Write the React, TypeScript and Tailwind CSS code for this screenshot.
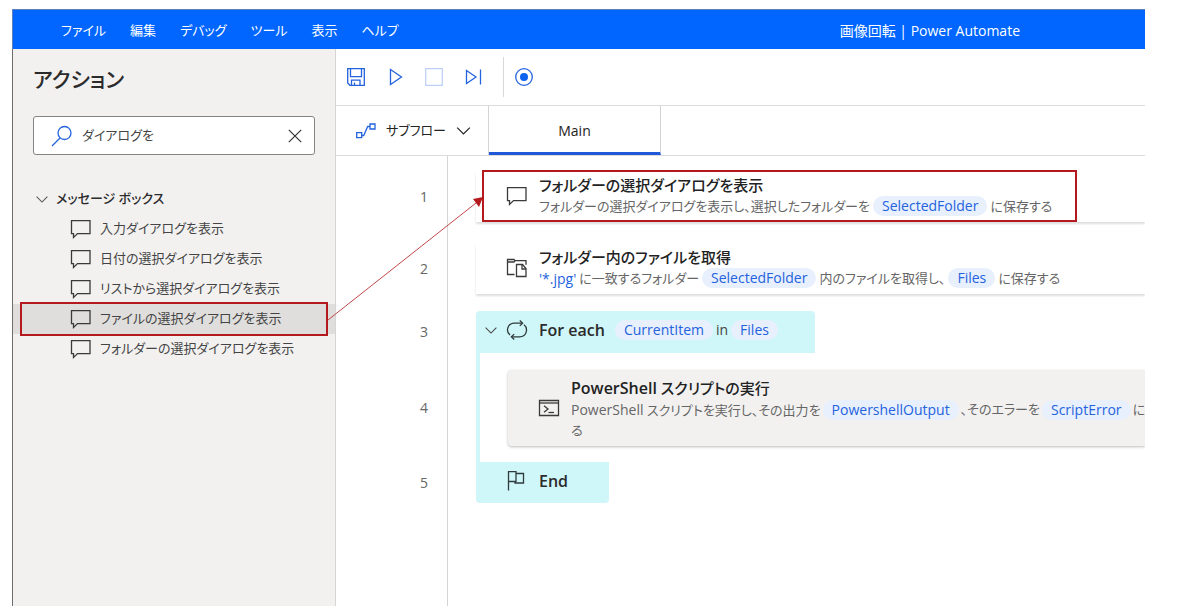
import type { ReactNode } from "react";

const MENU = ["ファイル", "編集", "デバッグ", "ツール", "表示", "ヘルプ"];

const ACTIONS = [
  { id: "input", label: "入力ダイアログを表示" },
  { id: "date", label: "日付の選択ダイアログを表示" },
  { id: "list", label: "リストから選択ダイアログを表示" },
  { id: "file", label: "ファイルの選択ダイアログを表示" },
  { id: "folder", label: "フォルダーの選択ダイアログを表示" },
];

function MessageIcon() {
  return (
    <svg width="22" height="20" viewBox="0 0 22 20" fill="none" stroke="#3a3a3a" strokeWidth="1.3" className="shrink-0">
      <path d="M1.5 1.6h18.5v13H7.500l-4 3.800v-3.800h-2z" />
    </svg>
  );
}

function FolderFilesIcon() {
  return (
    <svg width="22" height="20" viewBox="0 0 22 20" fill="none" stroke="#3a3a3a" strokeWidth="1.3" className="shrink-0">
      <path d="M8.500 16.500h-7v-15h6.500l1 1.200h11v4" />
      <path d="M1.500 4h6.500l1-1.300" />
      <path d="M10.500 6.500h6l3.500 4v8h-9.500z" />
      <path d="M16 6.500v4.500h4" />
    </svg>
  );
}

function LoopIcon() {
  return (
    <svg width="22" height="20" viewBox="0 0 22 20" fill="none" stroke="#2f3b3c" strokeWidth="1.3" className="shrink-0">
      <path d="M4 15C0 12 .5 3.500 8.500 3.200h8" />
      <path d="M13.800.5l2.800 2.700-2.800 2.700" />
      <path d="M18 4.800c4 3 3.500 11.700-4.500 12h-8" />
      <path d="M8.200 14.100l-2.800 2.700 2.800 2.700" />
    </svg>
  );
}

function ConsoleIcon() {
  return (
    <svg width="22" height="18" viewBox="0 0 22 18" fill="none" stroke="#3a3a3a" strokeWidth="1.3" className="shrink-0">
      <path d="M1.500 1.500h19v15h-19z" />
      <path d="M1.500 4h19" />
      <path d="M6 6.800l4 3.200-4 3.200" />
      <path d="M10.500 13.500h5.500" />
    </svg>
  );
}

function FlagIcon() {
  return (
    <svg width="22" height="20" viewBox="0 0 22 20" fill="none" stroke="#2f3b3c" strokeWidth="1.3" className="shrink-0">
      <path d="M2.500 19.500v-19h7.500v10H2.500" />
      <path d="M10 2.500h7.500v9.500H9v-1.500" />
    </svg>
  );
}

function Chevron({ className }: { className: string }) {
  return (
    <svg viewBox="0 0 14 8" fill="none" stroke="currentColor" strokeWidth="1.2" className={className}>
      <path d="M.7.7L7 7 13.300.7" />
    </svg>
  );
}

function Chip({ children }: { children: ReactNode }) {
  return (
    <button type="button" className="h-5 shrink-0 rounded-full bg-[#e8f0fd] px-[9px] text-sm leading-5 text-[#2463dd]">
      {children}
    </button>
  );
}

function Line({ n, spacing, children }: { n: number; spacing: string; children: ReactNode }) {
  return (
    <li className="flex">
      <span
        className={`flex w-28 shrink-0 items-center justify-end border-r border-[#d4d4d4] pr-[19px] text-sm text-[#666] ${spacing}`}
      >
        {n}
      </span>
      <div className="min-w-0 flex-1 pl-7">{children}</div>
    </li>
  );
}

function Sidebar() {
  return (
    <aside className="flex w-[324px] shrink-0 flex-col border-r border-l border-r-[#d6d5d4] border-l-[#6e6e6e] bg-[#f2f1f0]">
      <h1 className="px-5 pt-4 text-[21px] leading-7 font-medium text-[#2b2b2b]">アクション</h1>
      <div className="mx-5 mt-[23px] flex h-[39px] items-center rounded-[3px] border border-[#858483] bg-white px-3">
        <svg width="32" height="22" viewBox="0 0 32 22" fill="none" stroke="#2463dd" strokeWidth="1.3" className="shrink-0">
          <circle cx="18.500" cy="8" r="6.500" />
          <path d="M14 13l-8 8" />
        </svg>
        <input
          aria-label="アクションの検索"
          defaultValue="ダイアログを"
          className="min-w-0 flex-1 pl-1 text-[13px] text-[#444] outline-none"
        />
        <button type="button" aria-label="クリア">
          <svg width="14" height="14" viewBox="0 0 14 14" stroke="#333" strokeWidth="1.200">
            <path d="M.8.8l12.400 12.400M13.200.8L.8 13.200" />
          </svg>
        </button>
      </div>
      <button type="button" className="mt-[29px] flex h-[30px] items-center gap-2 pl-[23px] text-[13px] font-medium text-[#2b2b2b]">
        <Chevron className="h-[7px] w-3 text-[#555]" />
        メッセージ ボックス
      </button>
      <ul>
        {ACTIONS.map((action) => {
          const isSelected = action.id === "file";

          return (
            <li key={action.id} className="relative">
              <button
                type="button"
                className={`flex h-[30px] w-full items-center gap-2 pl-[57px] text-[13px] text-[#444] ${
                  isSelected ? "bg-[#dfdedc]" : ""
                }`}
              >
                <MessageIcon />
                {action.label}
              </button>
              {isSelected && (
                <span className="pointer-events-none absolute -inset-y-0.5 right-[7px] left-[7px] border-2 border-[#b3191d]" />
              )}
            </li>
          );
        })}
      </ul>
    </aside>
  );
}

function Toolbar() {
  return (
    <div className="flex h-[57px] shrink-0 items-center border-b border-[#dcdcdc] pl-[10px]">
      <button type="button" aria-label="保存" className="flex w-5 justify-center">
        <svg width="18" height="18" viewBox="0 0 18 18" fill="none" stroke="#2463dd" strokeWidth="1.300">
          <path d="M.7.7h16.600v16.600H3L.7 15z" />
          <path d="M3.500.7v8h11v-8" />
          <path d="M4.500 17v-4.800h8.500V17M7.500 17v-2.500" />
        </svg>
      </button>
      <button type="button" aria-label="実行" className="ml-5 flex w-5 justify-center">
        <svg width="14" height="18" viewBox="0 0 14 18" fill="none" stroke="#2463dd" strokeWidth="1.300">
          <path d="M1.500 1.500L12.500 9l-11 7.500z" />
        </svg>
      </button>
      <button type="button" aria-label="停止" disabled className="ml-[18px] flex w-5 justify-center">
        <svg width="18" height="18" viewBox="0 0 18 18" fill="none" stroke="#bcd0f6" strokeWidth="1.200">
          <path d="M.7.7h16.600v16.600H.7z" />
        </svg>
      </button>
      <button type="button" aria-label="ステップ実行" className="ml-5 flex w-5 justify-center">
        <svg width="18" height="18" viewBox="0 0 18 18" fill="none" stroke="#2463dd" strokeWidth="1.300">
          <path d="M1.500 2.500L11 9l-9.500 6.500zM15.500 1.500v15" />
        </svg>
      </button>
      <span className="ml-[19px] h-10 w-px bg-[#d8d8d8]" />
      <button type="button" aria-label="レコーダー" className="ml-[10px] flex w-5 justify-center">
        <svg width="20" height="20" viewBox="0 0 20 20" fill="none" stroke="#2463dd" strokeWidth="1.300">
          <circle cx="10" cy="10" r="8.300" />
          <circle cx="10" cy="10" r="4" fill="#0f62f0" stroke="none" />
        </svg>
      </button>
    </div>
  );
}

function Tabs() {
  return (
    <div className="flex h-[50px] shrink-0 border-b border-[#dcdcdc]">
      <button type="button" className="flex w-[153px] items-center border-r border-[#d4d4d4] pl-5 text-[13px] text-[#222]">
        <svg width="20" height="16" viewBox="0 0 20 16" fill="none" stroke="#2463dd" strokeWidth="1.300">
          <path d="M.7 9.700h5v5h-5zM14 1h5v5h-5z" />
          <path d="M5.700 12.500h2l4-9H14" />
        </svg>
        <span className="ml-[10px]">サブフロー</span>
        <Chevron className="mr-[17px] ml-auto h-2 w-[15px]" />
      </button>
      <button
        type="button"
        aria-current="page"
        className="h-[49px] w-[172px] border-r border-b-3 border-r-[#d4d4d4] border-b-[#2058d8] pt-1 text-sm text-[#222]"
      >
        Main
      </button>
    </div>
  );
}

function Flow() {
  return (
    <ol className="leading-[21px]">
      <Line n={1} spacing="pt-[15px]">
        <div className="pt-[15px]">
          <section className="relative flex h-[51px] items-center gap-[11px] pb-0.5 pl-[30px] whitespace-nowrap shadow-[0_2px_2px_#dedede]">
            <MessageIcon />
            <div>
              <h2 className="text-[15px] leading-[21px] font-medium text-[#222]">フォルダーの選択ダイアログを表示</h2>
              <p className="flex items-center gap-[3px] text-[13px] leading-[21px] text-[#666]">
                フォルダーの選択ダイアログを表示し、選択したフォルダーを
                <Chip>SelectedFolder</Chip>
                に保存する
              </p>
            </div>
            <span className="pointer-events-none absolute -top-px bottom-0 left-[6px] w-[595px] border-2 border-[#b3191d]" />
          </section>
        </div>
      </Line>
      <Line n={2} spacing="pt-[21px]">
        <div className="pt-[21px]">
          <section className="flex h-[51px] items-center gap-[11px] pb-0.5 pl-[30px] whitespace-nowrap shadow-[0_2px_2px_#dedede]">
            <FolderFilesIcon />
            <div>
              <h2 className="text-[15px] leading-[21px] font-medium text-[#222]">フォルダー内のファイルを取得</h2>
              <p className="flex items-center gap-[3px] text-[13px] leading-[21px] text-[#666]">
                <span className="text-sm leading-[21px] text-[#2463dd]">'*.jpg'</span>
                に一致するフォルダー
                <Chip>SelectedFolder</Chip>
                内のファイルを取得し、
                <Chip>Files</Chip>
                に保存する
              </p>
            </div>
          </section>
        </div>
      </Line>
      <Line n={3} spacing="pt-[17px]">
        <div className="pt-[17px]">
          <section className="flex h-[42px] w-[339px] items-center rounded-t bg-[#cff6f8] pb-1 pl-[9px]">
            <Chevron className="h-[7px] w-3 text-[#444]" />
            <span className="ml-[9px]">
              <LoopIcon />
            </span>
            <h2 className="ml-[11px] text-base font-semibold text-[#2b2b2b]">For each</h2>
            <p className="ml-[10px] flex items-center gap-[3px] text-sm text-[#444]">
              <Chip>CurrentItem</Chip>
              in
              <Chip>Files</Chip>
            </p>
          </section>
        </div>
      </Line>
      <Line n={4} spacing="pt-[17px] pb-4">
        <div className="border-l-4 border-[#cff6f8] pt-[17px] pb-4 pl-7">
          <section className="flex h-[76px] items-center gap-[11px] rounded-l-sm bg-[#f2f1f0] pl-[30px] whitespace-nowrap shadow-[0_1px_3px_#bdbdbd]">
            <ConsoleIcon />
            <div>
              <h2 className="text-[15px] leading-[21px] font-medium text-[#222]">
                <span className="text-base leading-[21px] font-semibold">PowerShell</span> スクリプトの実行
              </h2>
              <p className="flex items-center gap-0.5 text-[13px] leading-[21px] text-[#666]">
                <span>
                  <span className="text-sm leading-[21px]">PowerShell</span> スクリプトを実行し、その出力を
                </span>
                <Chip>PowershellOutput</Chip>
                、そのエラーを
                <Chip>ScriptError</Chip>
                に
              </p>
              <p className="text-[13px] leading-[18px] text-[#666]">る</p>
            </div>
          </section>
        </div>
      </Line>
      <Line n={5} spacing="">
        <section className="flex h-[41px] w-[133px] items-center gap-[11px] rounded-b bg-[#cff6f8] pb-1 pl-[30px]">
          <FlagIcon />
          <h2 className="text-base font-semibold text-[#2b2b2b]">End</h2>
        </section>
      </Line>
    </ol>
  );
}

export default function App() {
  return (
    <div className="h-screen bg-white pt-[9px] pr-[55px] pb-[6px] pl-3 font-['Open_Sans','Noto_Sans_CJK_JP',sans-serif] [font-feature-settings:'palt']">
      <div className="relative flex h-full flex-col overflow-hidden">
        <header className="flex h-10 shrink-0 items-center border-t border-l border-[#5c7fc0] bg-[#0066ff] pt-0.5 text-white">
          <nav className="flex pl-9 text-[13px]">
            {MENU.map((label) => (
              <button key={label} type="button" className="px-3">
                {label}
              </button>
            ))}
          </nav>
          <p className="mr-[125px] ml-auto text-sm">画像回転 | Power Automate</p>
        </header>
        <div className="flex min-h-0 flex-1">
          <Sidebar />
          <main className="flex min-w-0 flex-1 flex-col">
            <Toolbar />
            <Tabs />
            <Flow />
            <div className="w-28 flex-1 border-r border-[#d4d4d4]" />
          </main>
        </div>
        <svg width="160" height="130" viewBox="0 0 160 130" className="pointer-events-none absolute top-[185px] left-[314px]">
          <path d="M2 126L150 9" stroke="#c0474a" strokeWidth="1" fill="none" />
          <path d="M157 3l-4 10-6-8z" fill="#b3191d" />
        </svg>
      </div>
    </div>
  );
}
